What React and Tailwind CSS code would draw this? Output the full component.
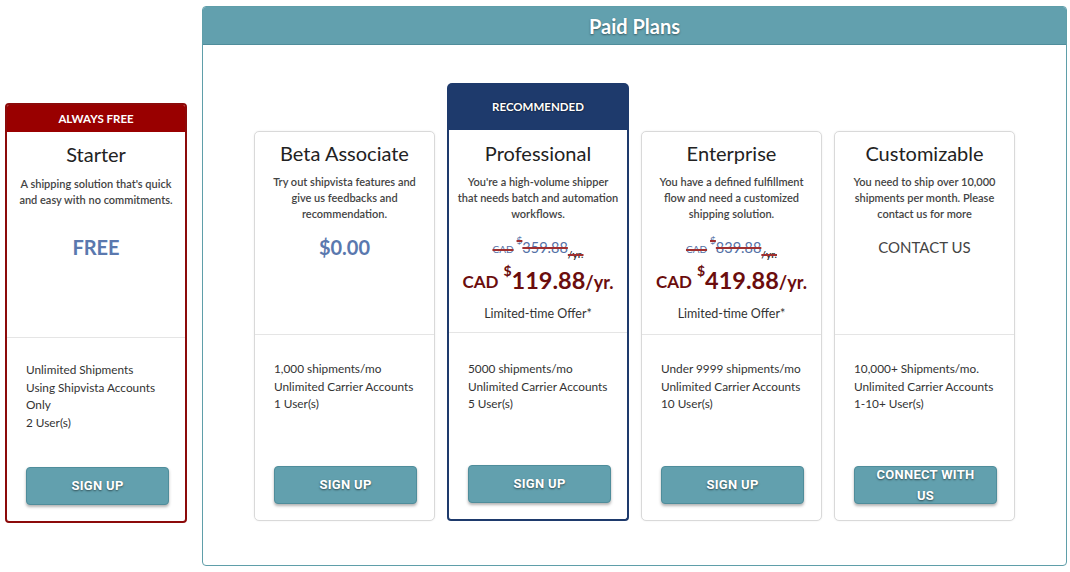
import React from "react";

const BODY = { fontFamily: 'Lato, "Open Sans", Arial, sans-serif' };
const BTN = { fontFamily: 'Roboto, "Liberation Sans", Arial, sans-serif' };

function Button({ children, wrap }) {
  return (
    <button
      style={BTN}
      className="w-[143px] h-[38px] mx-auto flex items-center justify-center rounded-[4px] bg-[#62a0ae] border border-[#4f8d9b] shadow-[0_2px_3px_rgba(0,0,0,0.3)] text-white font-bold text-[13px] tracking-[0.3px] [text-shadow:0_1px_2px_rgba(0,0,0,0.55)]"
    >
      {wrap ? (
        <span className="max-w-[100px] leading-[21px] text-center">{children}</span>
      ) : (
        <span>{children}</span>
      )}
    </button>
  );
}

function Card({ title, desc, price, features, button, wrap, highlight }) {
  return (
    <div
      className={
        "flex flex-col bg-white " +
        (highlight
          ? "w-[182px] border-2 border-t-0 border-[#1e3a6c] rounded-b-[4px]"
          : "w-[181px] h-[390px] border border-[#d9d9d9] rounded-[5px] shadow-[0_0_2px_rgba(0,0,0,0.08)]")
      }
      style={BODY}
    >
      <div
        className={
          "h-[203px] flex flex-col items-center border-b border-[#e5e5e5] " +
          (highlight ? "pt-[10px] px-[8px]" : "pt-[8px] px-[10.5px]")
        }
      >
        <div className="text-[20px] leading-[26px] text-[#222] whitespace-nowrap">{title}</div>
        <div className="mt-[8px] min-h-[48px] text-[11px] leading-[16px] text-[#444] font-semibold text-center">
          {desc}
        </div>
        {price}
      </div>
      <div
        className={
          "flex-1 flex flex-col pb-[16px] pl-[19px] pr-[8px] " +
          (highlight ? "pt-[27px]" : "pt-[25px]")
        }
      >
        <div className="text-[11.8px] leading-[17.5px] text-[#333] flex-1">
          {features.map((f, i) => (
            <div key={i}>{f}</div>
          ))}
        </div>
        <div className="pr-[11px]">
          <Button wrap={wrap}>{button}</Button>
        </div>
      </div>
    </div>
  );
}

function Offer({ old, now }) {
  return (
    <div className="flex flex-col items-center">
      <div className="mt-[14px] h-[20px] flex items-end text-[#5571a6] line-through decoration-[#a03030] decoration-[1.5px]">
        <span className="text-[10px] leading-[14px]">CAD</span>
        <span className="text-[10px] leading-[10px] self-start ml-[3px] -mt-[1px]">$</span>
        <span className="text-[14.5px] leading-[17px]">{old}</span>
        <span className="text-[10px] leading-[10px] font-bold text-[#333] -mb-[3px]">/yr.</span>
      </div>
      <div className="mt-[10px] h-[28px] flex items-end text-[#6b0d0d] font-bold">
        <span className="text-[17px] leading-[24px]">CAD</span>
        <span className="text-[14px] leading-[16px] self-start ml-[5px] -mt-[3px]">$</span>
        <span className="text-[23.5px] leading-[27px]">{now}</span>
        <span className="text-[18px] leading-[23px]">/yr.</span>
      </div>
      <div className="mt-[12px] text-[12.5px] leading-[16px] text-[#333]">Limited-time Offer*</div>
    </div>
  );
}

export default function App() {
  return (
    <div className="w-[1070px] h-[572px] bg-white flex items-start pl-[5px] pt-[6px]" style={BODY}>
      {/* Starter */}
      <div className="mt-[97px] w-[182px] h-[420px] flex flex-col border-2 border-[#8c0a0a] rounded-[4px] overflow-hidden bg-white">
        <div className="h-[27px] bg-[#990000] flex items-center justify-center text-white text-[11.5px] font-bold">
          ALWAYS FREE
        </div>
        <div className="h-[206px] flex flex-col items-center pt-[9px] px-[4px] border-b border-[#e5e5e5]">
          <div className="text-[20px] leading-[26px] text-[#222]">Starter</div>
          <div className="mt-[9px] min-h-[48px] text-[11px] leading-[16px] text-[#444] font-semibold text-center px-[8px]">
            A shipping solution that's quick and easy with no commitments.
          </div>
          <div className="mt-[10px] text-[20px] leading-[26px] font-bold text-[#5a78ae]">FREE</div>
        </div>
        <div className="flex-1 flex flex-col pt-[23px] pb-[16px] pl-[19px] pr-[8px]">
          <div className="text-[11.8px] leading-[17.5px] text-[#333] flex-1">
            <div>Unlimited Shipments</div>
            <div>Using Shipvista Accounts Only</div>
            <div>2 User(s)</div>
          </div>
          <div className="pr-[11px]">
            <Button>SIGN UP</Button>
          </div>
        </div>
      </div>

      {/* Paid plans */}
      <div className="ml-[15px] w-[865px] h-[560px] flex flex-col border border-[#5f9ea9] rounded-[4px] overflow-hidden">
        <div className="h-[38px] bg-[#62a0ae] border-b border-[#4f8d9b] flex items-center justify-center text-white text-[20px] font-bold [text-shadow:0_1px_2px_rgba(0,0,0,0.45)]">
          Paid Plans
        </div>
        <div className="flex-1 flex items-end justify-center gap-[12px] pb-[44px]">
          <Card
            title="Beta Associate"
            desc="Try out shipvista features and give us feedbacks and recommendation."
            price={<div className="mt-[12px] text-[20px] leading-[26px] font-bold text-[#5a78ae]">$0.00</div>}
            features={["1,000 shipments/mo", "Unlimited Carrier Accounts", "1 User(s)"]}
            button="SIGN UP"
          />
          <div className="flex flex-col">
            <div className="h-[47px] bg-[#1e3a6c] rounded-t-[5px] flex items-center justify-center text-white text-[11.5px] font-bold [text-shadow:0_0_2px_rgba(0,0,0,0.9)]">
              RECOMMENDED
            </div>
            <div className="h-[391px] flex">
              <Card
                highlight
                title="Professional"
                desc="You're a high-volume shipper that needs batch and automation workflows."
                price={<Offer old="359.88" now="119.88" />}
                features={["5000 shipments/mo", "Unlimited Carrier Accounts", "5 User(s)"]}
                button="SIGN UP"
              />
            </div>
          </div>
          <Card
            title="Enterprise"
            desc="You have a defined fulfillment flow and need a customized shipping solution."
            price={<Offer old="839.88" now="419.88" />}
            features={["Under 9999 shipments/mo", "Unlimited Carrier Accounts", "10 User(s)"]}
            button="SIGN UP"
          />
          <Card
            title="Customizable"
            desc="You need to ship over 10,000 shipments per month. Please contact us for more"
            price={<div className="mt-[14px] text-[15px] leading-[22px] text-[#444]">CONTACT US</div>}
            features={["10,000+ Shipments/mo.", "Unlimited Carrier Accounts", "1-10+ User(s)"]}
            button="CONNECT WITH US"
            wrap
          />
        </div>
      </div>
    </div>
  );
}
